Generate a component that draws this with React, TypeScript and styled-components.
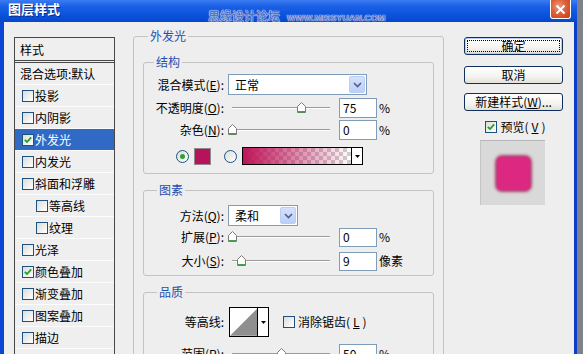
import styled, { createGlobalStyle } from "styled-components";

/* --- CSS --- */
const GlobalStyle = createGlobalStyle`
  html, body {
    margin: 0;
    padding: 0;
    background: #7e8189;
    overflow: hidden;
  }
  body {
    font-family: "Noto Sans CJK SC", "Noto Sans", sans-serif;
    font-size: 12px;
    color: #000;
  }
`;

const Screen = styled.div`
  position: relative;
  display: flex;
  width: 583px;
  height: 354px;
  overflow: hidden;
`;

const Window = styled.div`
  display: flex;
  flex-direction: column;
  width: 577px;
  height: 100%;
`;

const TitleBar = styled.div`
  height: 22px;
  flex-shrink: 0;
  display: flex;
  align-items: flex-start;
  justify-content: space-between;
  padding: 0 6px 0 8px;
  background: linear-gradient(#3b7cf2 0%, #1a5fe6 30%, #0a52dc 70%, #0647cc 100%);
`;

const TitleText = styled.div`
  margin-top: 1px;
  font-size: 13px;
  line-height: 16px;
  font-weight: 700;
  color: #fff;
  text-shadow: 1px 1px 0 #0b2a86;
`;

const CloseButton = styled.div`
  width: 21px;
  height: 19px;
  box-sizing: border-box;
  border: 1px solid #fff;
  border-top: none;
  border-radius: 0 0 3px 3px;
  background: radial-gradient(circle at 40% 35%, #ee9a7a 0%, #e0603a 45%, #c23d16 100%);
  display: flex;
  align-items: center;
  justify-content: center;
`;

const Watermark = styled.div`
  position: absolute;
  left: 208px;
  top: 9px;
  display: flex;
  align-items: baseline;
  gap: 7px;
  color: #4f74c8;
  text-shadow: 0 0 1px #fff, 0 0 1px #fff;
  pointer-events: none;
`;

const WatermarkCn = styled.span`
  font-size: 12px;
  line-height: 14px;
  font-weight: 700;
`;

const WatermarkEn = styled.span`
  font-family: "Liberation Sans", Arial, sans-serif;
  font-size: 9px;
  font-weight: 700;
`;

const Body = styled.div`
  flex: 1;
  display: flex;
  align-items: flex-start;
  padding: 15px 0 0 10px;
  background: #eeeeee;
  border-left: 4px solid #0a46d6;
  border-right: 3px solid #0a3ec8;
  overflow: hidden;
`;

const StyleList = styled.div`
  width: 101px;
  height: 330px;
  box-sizing: border-box;
  flex-shrink: 0;
  border: 1px solid #474747;
  background: #efefef;
`;

const ListHeader = styled.div`
  height: 25px;
  box-sizing: border-box;
  padding-left: 5px;
  display: flex;
  align-items: center;
  border-bottom: 3px double #474747;
`;

const ListRow = styled.div<{ $selected?: boolean; $indent?: boolean; $plain?: boolean }>`
  height: 22px;
  box-sizing: border-box;
  display: flex;
  align-items: center;
  gap: 1px;
  padding-left: ${(p) => (p.$plain ? 5 : p.$indent ? 21 : 7)}px;
  border-bottom: 1px solid #fcfcfc;
  background: ${(p) => (p.$selected ? "#316ac5" : "transparent")};
  color: ${(p) => (p.$selected ? "#fff" : "#000")};
  line-height: 14px;
`;

const CheckBox = styled.span`
  width: 12px;
  height: 12px;
  box-sizing: border-box;
  flex-shrink: 0;
  border: 1px solid #1c5180;
  background: linear-gradient(135deg, #dcdcd7, #ffffff);
  display: flex;
  align-items: center;
  justify-content: center;
`;

const Middle = styled.div`
  width: 311px;
  margin-left: 18px;
  margin-top: -8px;
  flex-shrink: 0;
`;

const OuterGroup = styled.fieldset`
  margin: 0;
  padding: 12px 9px 0 9px;
  border: 1px solid #c3c3c3;
  border-radius: 3px;
  min-width: 0;
  height: 400px;
  box-sizing: border-box;
`;

const Legend = styled.legend<{ $offset: number }>`
  margin-left: ${(p) => p.$offset}px;
  padding: 0 2px;
  font-size: 12px;
  line-height: 14px;
  color: #1f4fb0;
`;

const SubGroup = styled.fieldset<{ $top: number; $bottom: number; $gap?: number }>`
  margin: ${(p) => p.$gap ?? 0}px 0 0 0;
  padding: ${(p) => p.$top}px 0 ${(p) => p.$bottom}px 0;
  border: 1px solid #c3c3c3;
  border-radius: 3px;
  min-width: 0;
  display: flex;
  flex-direction: column;
`;

const FormRow = styled.div<{ $h: number; $mt?: number }>`
  display: flex;
  align-items: center;
  height: ${(p) => p.$h}px;
  margin-top: ${(p) => p.$mt ?? 0}px;
`;

const Label = styled.span`
  width: 80px;
  flex-shrink: 0;
  text-align: right;
  white-space: nowrap;
  line-height: 14px;
`;

const Select = styled.div<{ $w: number }>`
  width: ${(p) => p.$w}px;
  height: 21px;
  margin-left: 4px;
  box-sizing: border-box;
  border: 1px solid #7f9db9;
  background: #fff;
  display: flex;
  align-items: center;
  justify-content: space-between;
  padding: 0 1px 0 6px;
  line-height: 14px;
`;

const SelectButton = styled.span`
  width: 16px;
  height: 17px;
  box-sizing: border-box;
  border: 1px solid #b9cdf7;
  border-radius: 2px;
  background: linear-gradient(#d5e1fc, #bccffa);
  display: flex;
  align-items: center;
  justify-content: center;
`;

const SliderBox = styled.div`
  position: relative;
  width: 106px;
  height: 14px;
  margin-left: 4px;
  flex-shrink: 0;
`;

const SliderTrack = styled.div`
  position: absolute;
  left: 4px;
  right: 4px;
  top: 6px;
  height: 0;
  border-top: 1px solid #9b9b9b;
  border-bottom: 1px solid #ffffff;
`;

const SliderThumb = styled.svg`
  position: absolute;
  top: 1px;
  width: 9px;
  height: 11px;
`;

const NumberInput = styled.div<{ $h: number }>`
  width: 38px;
  height: ${(p) => p.$h}px;
  margin-left: 5px;
  box-sizing: border-box;
  border: 1px solid #7f9db9;
  background: #fff;
  padding-left: 3px;
  display: flex;
  align-items: center;
  line-height: 14px;
`;

const Unit = styled.span`
  margin-left: 2px;
  line-height: 14px;
`;

const ColorRow = styled.div`
  display: flex;
  align-items: center;
  height: 18px;
  margin-top: 7px;
  padding-left: 32px;
`;

const Radio = styled.span<{ $gap: number }>`
  width: 13px;
  height: 13px;
  margin-left: ${(p) => p.$gap}px;
  box-sizing: border-box;
  border: 1px solid #1c5180;
  border-radius: 50%;
  background: linear-gradient(135deg, #dcdcd7, #ffffff);
  display: flex;
  align-items: center;
  justify-content: center;
`;

const RadioDot = styled.span`
  width: 5px;
  height: 5px;
  border-radius: 50%;
  background: #2ea12e;
`;

const Swatch = styled.span`
  width: 17px;
  height: 17px;
  margin-left: 5px;
  box-sizing: border-box;
  border: 1px solid #8c8c8c;
  background: #b8135a;
`;

const GradientPicker = styled.div`
  width: 121px;
  height: 18px;
  margin-left: 5px;
  box-sizing: border-box;
  border: 1px solid #000;
  display: flex;
  background: #fff;
`;

const GradientStrip = styled.span`
  flex: 1;
  background:
    linear-gradient(to right, rgba(190, 20, 88, 1), rgba(190, 20, 88, 0)),
    repeating-conic-gradient(#cfcfcf 0% 25%, #ffffff 0% 50%) 0 0 / 8px 8px;
`;

const PickerArrow = styled.span`
  width: 10px;
  border-left: 1px solid #000;
  display: flex;
  align-items: center;
  justify-content: center;
  background: #fff;
`;

const ContourPicker = styled.div`
  width: 40px;
  height: 30px;
  margin-left: 5px;
  box-sizing: border-box;
  border: 1px solid #000;
  display: flex;
  background: #fff;
`;

const ContourPreview = styled.svg`
  width: 28px;
  height: 28px;
`;

const CheckLabel = styled.span<{ $ml?: number }>`
  display: flex;
  align-items: center;
  gap: 3px;
  margin-left: ${(p) => p.$ml ?? 0}px;
  line-height: 14px;
`;

const RightPanel = styled.div`
  width: 99px;
  margin-left: 20px;
  flex-shrink: 0;
  display: flex;
  flex-direction: column;
  align-items: center;
`;

const Button = styled.button<{ $default?: boolean; $mt: number }>`
  width: 99px;
  height: 18px;
  margin-top: ${(p) => p.$mt}px;
  box-sizing: border-box;
  padding: 0;
  border: 1px solid #0f2f5c;
  border-radius: 3px;
  background: linear-gradient(#ffffff, #f4f3ef 60%, #e3e1d9);
  font-family: "Noto Sans CJK SC", sans-serif;
  font-size: 12px;
  line-height: 14px;
  color: #000;
  outline: ${(p) => (p.$default ? "1px dotted #000" : "none")};
  outline-offset: -4px;
  box-shadow: ${(p) => (p.$default ? "inset 0 0 0 1px #b7cdf3" : "none")};
`;

const PreviewCheck = styled(CheckLabel)`
  margin-top: 9px;
  height: 14px;
  margin-left: 4px;
`;

const PreviewBox = styled.div`
  width: 65px;
  height: 65px;
  margin-top: 6px;
  margin-left: -2px;
  box-sizing: border-box;
  border-top: 1px solid #b5b5b5;
  border-left: 1px solid #c5c5c5;
  background: #d9d9d9;
  display: flex;
  align-items: center;
  justify-content: center;
`;

const PreviewLayer = styled.div`
  width: 33px;
  height: 33px;
  border-radius: 5px;
  background: #dc2881;
  box-shadow: 0 0 3px 2px rgba(176, 30, 96, 0.85);
`;

const Desktop = styled.div`
  flex: 1;
  background: #7e8189;
`;

/* --- Parts --- */
function Check({ checked }: { checked?: boolean }) {
  return (
    <CheckBox>
      {checked && (
        <svg width="8" height="8" viewBox="0 0 8 8">
          <path d="M0.8 3.8 L3 6 L7.2 1.4" fill="none" stroke="#21a121" strokeWidth="1.8" />
        </svg>
      )}
    </CheckBox>
  );
}

function Slider({ pos }: { pos: number }) {
  return (
    <SliderBox>
      <SliderTrack />
      <SliderThumb viewBox="0 0 9 11" style={{ left: pos }}>
        <path d="M0.5 4.5 L4.5 0.5 L8.5 4.5 L8.5 10.5 L0.5 10.5 Z" fill="#fff" stroke="#7c7c7c" />
        <path d="M1 9.8 L8 9.8" stroke="#2e9a35" strokeWidth="1.4" />
      </SliderThumb>
    </SliderBox>
  );
}

function Chevron() {
  return (
    <svg width="9" height="6" viewBox="0 0 9 6">
      <path d="M1 1 L4.5 4.5 L8 1" fill="none" stroke="#4d6185" strokeWidth="1.6" />
    </svg>
  );
}

function SmallArrow() {
  return (
    <svg width="5" height="3" viewBox="0 0 5 3">
      <path d="M0 0 L5 0 L2.5 3 Z" fill="#000" />
    </svg>
  );
}

const styleItems = [
  { name: "投影" },
  { name: "内阴影" },
  { name: "外发光", checked: true, selected: true },
  { name: "内发光" },
  { name: "斜面和浮雕" },
  { name: "等高线", indent: true },
  { name: "纹理", indent: true },
  { name: "光泽" },
  { name: "颜色叠加", checked: true },
  { name: "渐变叠加" },
  { name: "图案叠加" },
  { name: "描边" },
];

function App() {
  return (
    <Screen>
      <GlobalStyle />
      <Window>
        <TitleBar>
          <TitleText>图层样式</TitleText>
          <CloseButton>
            <svg width="11" height="11" viewBox="0 0 11 11">
              <path d="M1.5 1.5 L9.5 9.5 M9.5 1.5 L1.5 9.5" stroke="#fff" strokeWidth="2" />
            </svg>
          </CloseButton>
        </TitleBar>
        <Body>
          {/* 样式列表 */}
          <StyleList>
            <ListHeader>样式</ListHeader>
            <ListRow $plain>混合选项:默认</ListRow>
            {styleItems.map((item) => (
              <ListRow key={item.name} $selected={item.selected} $indent={item.indent}>
                <Check checked={item.checked} />
                {item.name}
              </ListRow>
            ))}
          </StyleList>

          {/* 外发光 设置 */}
          <Middle>
            <OuterGroup>
              <Legend $offset={5}>外发光</Legend>
              <SubGroup $top={5} $bottom={8}>
                <Legend $offset={10}>结构</Legend>
                <FormRow $h={21}>
                  <Label>
                    混合模式(<u>E</u>):
                  </Label>
                  <Select $w={139}>
                    正常
                    <SelectButton>
                      <Chevron />
                    </SelectButton>
                  </Select>
                </FormRow>
                <FormRow $h={20} $mt={3}>
                  <Label>
                    不透明度(<u>O</u>):
                  </Label>
                  <Slider pos={69} />
                  <NumberInput $h={20}>75</NumberInput>
                  <Unit>%</Unit>
                </FormRow>
                <FormRow $h={20} $mt={2}>
                  <Label>
                    杂色(<u>N</u>):
                  </Label>
                  <Slider pos={0} />
                  <NumberInput $h={20}>0</NumberInput>
                  <Unit>%</Unit>
                </FormRow>
                <ColorRow>
                  <Radio $gap={0}>
                    <RadioDot />
                  </Radio>
                  <Swatch />
                  <Radio $gap={13} />
                  <GradientPicker>
                    <GradientStrip />
                    <PickerArrow>
                      <SmallArrow />
                    </PickerArrow>
                  </GradientPicker>
                </ColorRow>
              </SubGroup>

              <SubGroup $top={8} $bottom={4} $gap={9}>
                <Legend $offset={13}>图素</Legend>
                <FormRow $h={21}>
                  <Label>
                    方法(<u>Q</u>):
                  </Label>
                  <Select $w={70}>
                    柔和
                    <SelectButton>
                      <Chevron />
                    </SelectButton>
                  </Select>
                </FormRow>
                <FormRow $h={20} $mt={1}>
                  <Label>
                    扩展(<u>P</u>):
                  </Label>
                  <Slider pos={0} />
                  <NumberInput $h={19}>0</NumberInput>
                  <Unit>%</Unit>
                </FormRow>
                <FormRow $h={20} $mt={4}>
                  <Label>
                    大小(<u>S</u>):
                  </Label>
                  <Slider pos={9} />
                  <NumberInput $h={19}>9</NumberInput>
                  <Unit>像素</Unit>
                </FormRow>
              </SubGroup>

              <SubGroup $top={8} $bottom={4} $gap={9}>
                <Legend $offset={13}>品质</Legend>
                <FormRow $h={30}>
                  <Label>等高线:</Label>
                  <ContourPicker>
                    <ContourPreview viewBox="0 0 28 28">
                      <path d="M0 28 L28 0 L28 28 Z" fill="#8f8f8f" />
                    </ContourPreview>
                    <PickerArrow>
                      <SmallArrow />
                    </PickerArrow>
                  </ContourPicker>
                  <CheckLabel $ml={14}>
                    <Check />
                    消除锯齿(<u>L</u>)
                  </CheckLabel>
                </FormRow>
                <FormRow $h={20} $mt={7}>
                  <Label>
                    范围(<u>R</u>):
                  </Label>
                  <Slider pos={49} />
                  <NumberInput $h={20}>50</NumberInput>
                  <Unit>%</Unit>
                </FormRow>
              </SubGroup>
            </OuterGroup>
          </Middle>

          {/* 버튼 */}
          <RightPanel>
            <Button $default $mt={0}>
              确定
            </Button>
            <Button $mt={11}>取消</Button>
            <Button $mt={9}>
              新建样式(<u>W</u>)...
            </Button>
            <PreviewCheck>
              <Check checked />
              预览(<u>V</u>)
            </PreviewCheck>
            <PreviewBox>
              <PreviewLayer />
            </PreviewBox>
          </RightPanel>
        </Body>
      </Window>
      <Desktop />
      <Watermark>
        <WatermarkCn>思缘设计论坛</WatermarkCn>
        <WatermarkEn>WWW.MISSYUAN.COM</WatermarkEn>
      </Watermark>
    </Screen>
  );
}

export default App;
